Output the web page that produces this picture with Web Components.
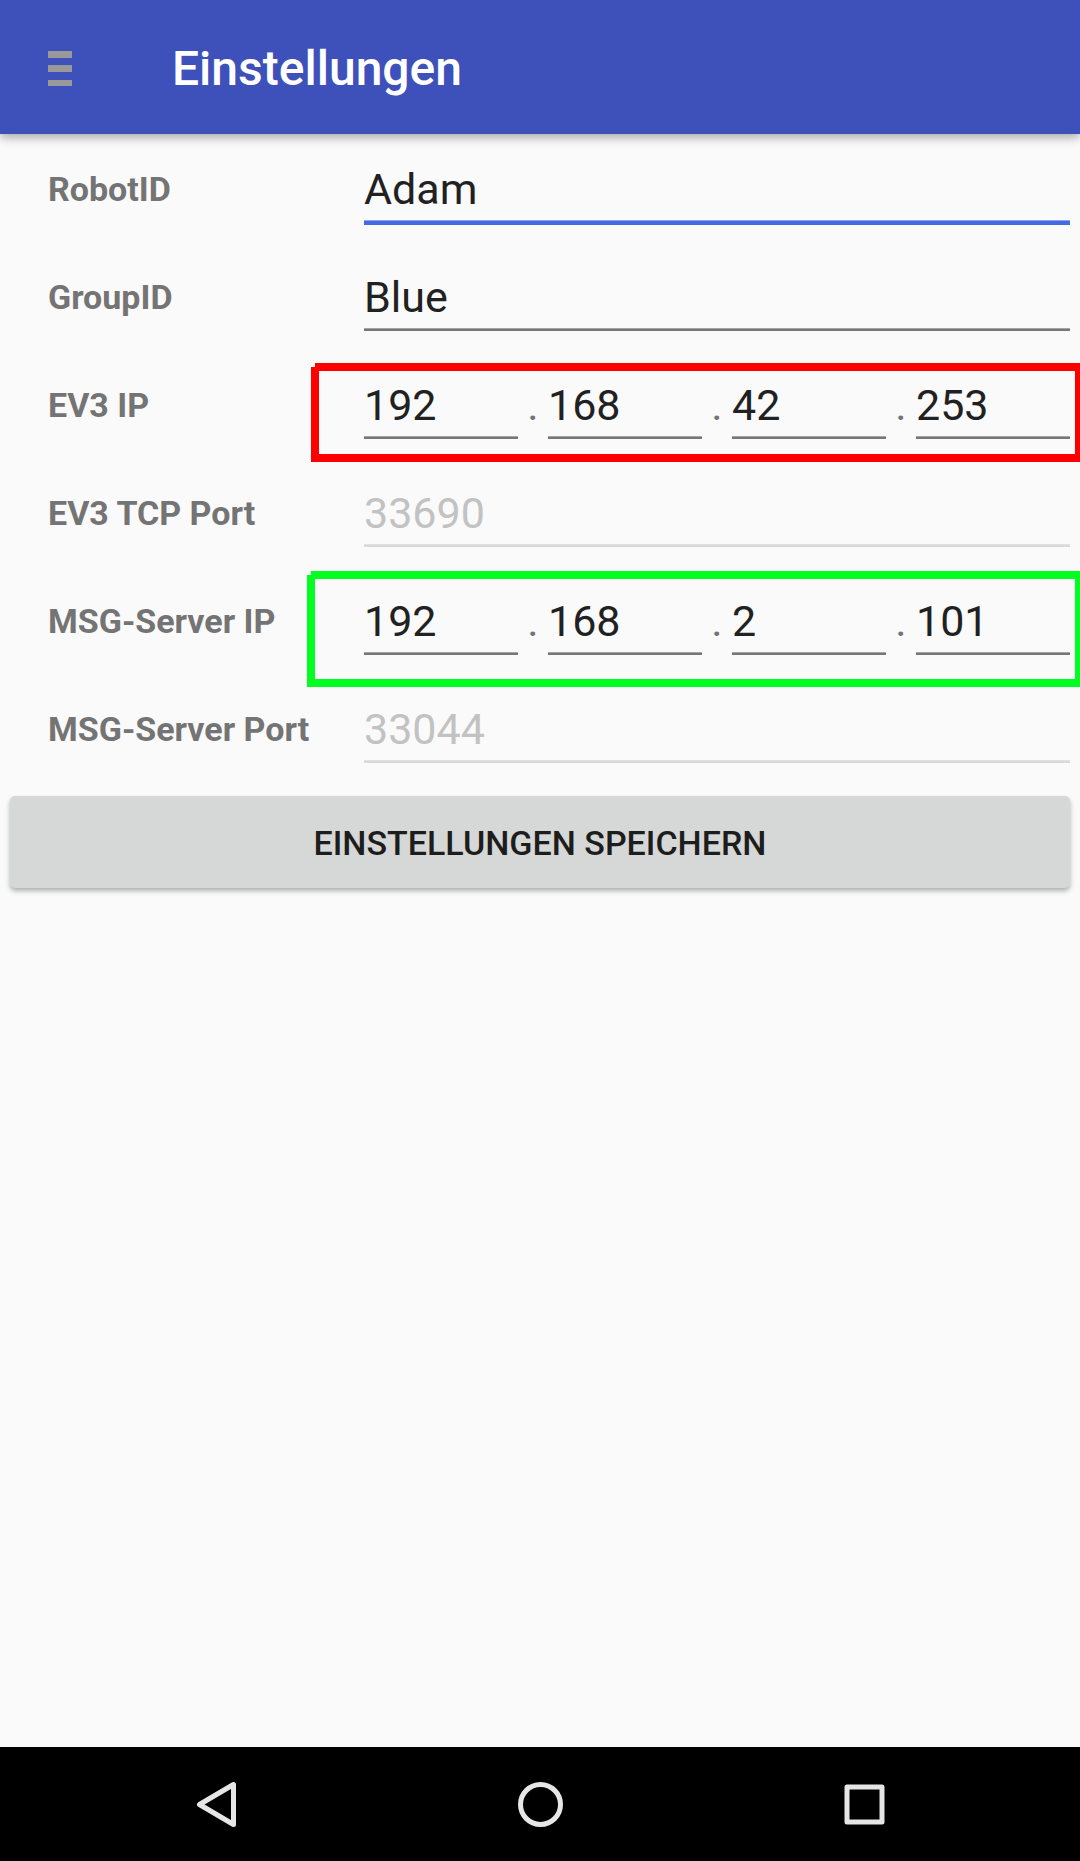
<!DOCTYPE html>
<html lang="de">
<head>
<meta charset="utf-8">
<meta name="viewport" content="width=device-width, initial-scale=1">
<title>Einstellungen</title>
<style>
  body { margin: 0; background: #fafafa; color: #212121; font-family: Roboto, "Liberation Sans", sans-serif; }
</style>
</head>
<body>
<settings-screen></settings-screen>

<script>
function mount(host, html) {
  const t = document.createElement('template');
  t.innerHTML = html;
  host.attachShadow({ mode: 'open' }).append(t.content.cloneNode(true));
}

/* Underlined text box styling shared by the single and the IP fields. */
const INPUT_CSS = `
  input {
    --line: #767676; --edge: #a3a3a3; --thick: 2px;
    box-sizing: content-box; display: block; flex: 1 1 0; width: 100%; min-width: 0;
    height: 50px; margin: 0; padding: 30px 0 7px; border: 0; border-radius: 0;
    border-bottom: var(--thick) solid var(--line); outline: 0;
    background: linear-gradient(var(--edge), var(--edge)) 0 100% / 100% 1px no-repeat;
    color: #212121; font: 43px/50px Roboto, "Liberation Sans", sans-serif;
  }
  input.active { --line: #446be2; --edge: #8aa3ec; --thick: 4px; }
  input:disabled { --line: #d9d9d9; --edge: #e2e2e2; color: #c2c2c2; opacity: 1; }
`;
const ROW_CSS = `
  :host { display: flex; align-items: flex-start; height: 108px; padding: 0 10px 0 48px; }
  label { flex: 0 0 316px; padding-top: 35px; color: #747474; font-size: 34px; line-height: 40px; font-weight: 700; white-space: nowrap; }
  .box { flex: 1; min-width: 0; display: flex; position: relative; }
`;

customElements.define('app-bar', class extends HTMLElement {
  constructor() {
    super();
    mount(this, `<style>
      :host { display: flex; box-sizing: border-box; align-items: center; height: 134px; padding: 4px 48px 0; gap: 100px; background: #3e51bb;
        color: #fff; box-shadow: 0 3px 10px rgba(0,0,0,.36); position: relative; }
      button { display: block; padding: 0; border: 0; background: none; }
      svg { display: block; }
      h1 { margin: 0; font-size: 48px; line-height: 56px; font-weight: 500; }
    </style>
    <button type="button" aria-label="Menü">
      <svg width="24" height="36" viewBox="0 0 24 36" fill="#999"><path d="M0 0h24v7H0zM0 14h24v7H0zM0 29h24v6H0z"/></svg>
    </button>
    <h1><slot></slot></h1>`);
  }
});

customElements.define('text-row', class extends HTMLElement {
  constructor() {
    super();
    const type = this.hasAttribute('active') ? 'class="active"' : this.hasAttribute('disabled') ? 'disabled' : '';
    mount(this, `<style>${ROW_CSS}${INPUT_CSS}</style>
      <label for="value">${this.getAttribute('label')}</label>
      <div class="box"><input id="value" type="text" value="${this.getAttribute('value')}" ${type}></div>`);
  }
});

customElements.define('ip-row', class extends HTMLElement {
  constructor() {
    super();
    const label = this.getAttribute('label');
    const octets = this.getAttribute('value').split('.').map((v, i) =>
      `<input type="text" inputmode="numeric" value="${v}" ${i ? `aria-label="${label} ${i + 1}"` : 'id="value"'}>`
    ).join('<span>.</span>');
    mount(this, `<style>${ROW_CSS}${INPUT_CSS}
      span { flex: 0 0 30px; padding-top: 30px; text-align: center; color: #747474; font-size: 43px; line-height: 50px; }
      .box::after {
        content: ""; position: absolute; pointer-events: none; box-sizing: border-box;
        inset: var(--mark-top) -10px var(--mark-bottom) var(--mark-left);
        border: 8px solid var(--mark); border-right-width: 5px;
        clip-path: polygon(4px 0, 100% 0, 100% 100%, 0 100%, 0 4px, 4px 4px);
      }
      .box { height: 108px; align-items: flex-start; }
    </style>
    <label for="value">${label}</label>
    <div class="box">${octets}</div>`);
  }
});

customElements.define('save-button', class extends HTMLElement {
  constructor() {
    super();
    mount(this, `<style>
      :host { display: block; padding: 14px 10px; }
      button { display: block; width: 100%; padding: 27px 16px 25px; border: 0; border-radius: 5px; background: #d6d8d7;
        color: #1d1d1d; font: 500 34px/40px Roboto, "Liberation Sans", sans-serif; text-transform: uppercase;
        box-shadow: 0 3px 5px rgba(0,0,0,.3); }
    </style><button type="submit"><slot></slot></button>`);
  }
});

customElements.define('system-nav', class extends HTMLElement {
  constructor() {
    super();
    mount(this, `<style>
      :host { display: flex; justify-content: center; height: 114px; background: #000; }
      button { flex: 0 0 30%; display: flex; align-items: center; justify-content: center; padding: 0; border: 0; background: none; }
      svg { display: block; fill: none; stroke: #e6e6e6; stroke-width: 5; stroke-linejoin: round; }
    </style>
    <button type="button" aria-label="Zurück"><svg width="48" height="48" viewBox="0 0 48 48"><path d="M7.500 24.500L41.500 4.500V44.500Z"/></svg></button>
    <button type="button" aria-label="Startseite"><svg width="48" height="48" viewBox="0 0 48 48"><circle cx="24.500" cy="24.500" r="20"/></svg></button>
    <button type="button" aria-label="Übersicht"><svg width="48" height="48" viewBox="0 0 48 48"><rect x="7" y="7" width="35" height="35"/></svg></button>`);
  }
});

customElements.define('settings-screen', class extends HTMLElement {
  constructor() {
    super();
    mount(this, `<style>
      :host { display: flex; flex-direction: column; min-height: 100vh; }
      main { flex: 1; }
      .ev3 { --mark: #ff0000; --mark-top: 13px; --mark-bottom: -4px; --mark-left: -53px; }
      .msg { --mark: #00ff21; --mark-top: 5px; --mark-bottom: -13px; --mark-left: -57px; }
    </style>
    <app-bar>Einstellungen</app-bar>
    <main>
      <text-row label="RobotID" value="Adam" active></text-row>
      <text-row label="GroupID" value="Blue"></text-row>
      <ip-row class="ev3" label="EV3 IP" value="192.168.42.253"></ip-row>
      <text-row label="EV3 TCP Port" value="33690" disabled></text-row>
      <ip-row class="msg" label="MSG-Server IP" value="192.168.2.101"></ip-row>
      <text-row label="MSG-Server Port" value="33044" disabled></text-row>
      <save-button>Einstellungen speichern</save-button>
    </main>
    <system-nav></system-nav>`);
  }
});
</script>
</body>
</html>
